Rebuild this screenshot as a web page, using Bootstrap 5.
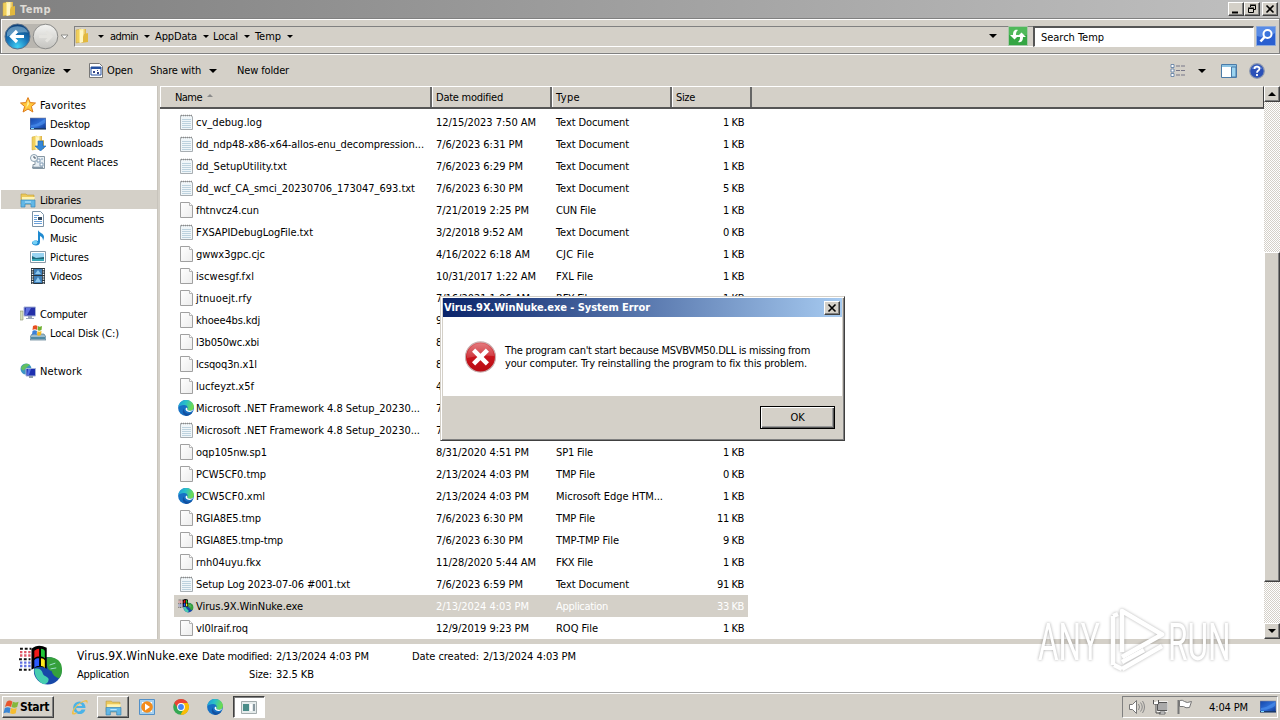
<!DOCTYPE html>
<html lang="en">
<head>
<meta charset="utf-8">
<title>Temp</title>
<link href="https://cdn.jsdelivr.net/npm/bootstrap@5.3.0/dist/css/bootstrap.min.css" rel="stylesheet">
<style>
:root{--face:#d4d0c8}
body{width:1280px;height:720px;overflow:hidden;background:var(--face);color:#000;font:11px/13px "DejaVu Sans Condensed","DejaVu Sans",sans-serif;font-stretch:condensed}
svg{display:block;flex:none}
[data-w]{display:inline-block;white-space:pre}
.frame{width:1280px;height:720px}
.titlebar{height:18px;background:linear-gradient(90deg,#808080,#c0c0c0);color:#dedbd5;font-weight:700;padding:0 2px 0 1px}
.raised{background:var(--face);border:1px solid;border-color:#fff #404040 #404040 #fff;box-shadow:inset -1px -1px #808080}
.wbtn{width:16px;height:14px}
.address{height:36px;border:1px solid;border-color:#808080 #808080 #808080 #777;box-shadow:inset 1px 1px #fff,inset 0 -1px #d8d5ce;padding-left:3px}
.crumbs{width:959px;height:21px;border-top:1px solid #808080;border-left:1px solid #808080;border-bottom:1px solid #fff;margin-left:4px}
.searchbox{width:221px;height:21px;background:#fff;border:1px solid #fff;border-top:2px solid #555;border-left:2px solid #555;padding:1px 0 0 6px;margin-left:5px}
.toolbar-row{height:32px;border-top:1px solid #fff;padding-left:12px}
.arr{width:0;height:0;border:4px solid transparent;border-top-color:#000;border-bottom:0;flex:none}
.arr.tiny{border-width:3px 3px 0}
.arr.up{border:4px solid transparent;border-bottom-color:#000;border-top:0}
.main{height:553px}
.tree{width:157px;background:#fff;padding-top:9px}
.tree>div{height:19px;padding-left:20px;gap:4px;border-left:1px solid #fff}
.tree span,.heads span{padding-top:1px}
.tree>.sub{padding-left:29px;gap:4px}
.tree>.root{padding-left:19px}
.tree>.sel{background:var(--face)}
.split{width:3px;background:var(--face);border-left:1px solid #c8c4bc}
.files{width:1104px;background:#fff}
.heads{height:23px;background:var(--face);border-top:1px solid #fff;border-bottom:2px solid #555;margin-bottom:2px;border-right:1px solid #404040}
.heads>div{border-left:1px solid #fff;border-right:2px solid #666;height:20px;padding-left:3px}
.file{height:22px;width:574px;margin-left:14px;padding-left:4px}
.file svg{margin-top:-1px}
.file.sel{background:var(--face)}
.file.sel .dim{color:#fff}
.c1{width:258px;gap:2px}.c2{width:120px}.c3{width:120px}.c4{width:68px;text-align:right}
.track{width:16px;background:repeating-conic-gradient(#fff 0 25%,#d4d0c8 0 50%) 0 0/2px 2px}
.details{height:49px;background:#fff;padding-left:18px;border-bottom:1px solid #aaa}
.band{height:5px;background:var(--face)}
.taskbar{height:27px;background:var(--face);border-top:1px solid #fff;padding-left:2px}
.start{width:52px;height:22px;font-weight:700;font-size:12px}
.task{width:32px;height:22px}
.task.on{background:#fff;border:1px solid;border-color:#404040 #fff #fff #404040;box-shadow:inset 1px 1px #808080}
.tray{width:156px;height:22px;border:1px solid;border-color:#808080 #fff #fff #808080;padding-left:5px}
.dlg{position:absolute;left:440px;top:296px;width:405px;height:145px;background:var(--face);border:1px solid;border-color:var(--face) #404040 #404040 var(--face);box-shadow:inset 1px 1px #fff,inset -1px -1px #808080;padding:1px 2px 2px 1px}
.dlg-title{height:19px;margin-left:1px;background:linear-gradient(90deg,#0a246a,#a6caf0);color:#fff;font-weight:700;padding-left:1px;padding-right:2px}
.dlg-body{height:79px;background:#fff;padding-left:21px;gap:8px;margin-left:1px}
.okb{width:75px;height:23px;border:1px solid #000;background:var(--face);box-shadow:inset 1px 1px #fff,inset -1px -1px #555,inset -2px -2px #999}
.wm{position:absolute;left:1030px;top:600px}
</style>
</head>
<body>
<svg width="0" height="0" class="position-absolute">
<defs>
<linearGradient id="gf" x1="0" x2="1"><stop offset="0" stop-color="#f9e27c"/><stop offset=".5" stop-color="#fff3b0"/><stop offset="1" stop-color="#dcae3a"/></linearGradient>
<linearGradient id="gs" x1="0" y1="0" x2="1" y2="1"><stop offset="0" stop-color="#1546a8"/><stop offset=".55" stop-color="#2f6fd8"/><stop offset="1" stop-color="#0c328c"/></linearGradient>
<radialGradient id="gb" cx=".5" cy=".9" r=".9"><stop offset="0" stop-color="#3fd0f4"/><stop offset=".5" stop-color="#1874b8"/><stop offset="1" stop-color="#0c3c74"/></radialGradient>
<linearGradient id="gg" x1="0" y1="0" x2="0" y2="1"><stop offset="0" stop-color="#f4f4f2"/><stop offset="1" stop-color="#c4c3bf"/></linearGradient>
<linearGradient id="gr" x1="0" y1="0" x2="0" y2="1"><stop offset="0" stop-color="#e0686c"/><stop offset=".5" stop-color="#c8141c"/><stop offset="1" stop-color="#b80c14"/></linearGradient>
<linearGradient id="ge" x1="0" y1="0" x2="1" y2=".3"><stop offset="0" stop-color="#1c98dc"/><stop offset=".5" stop-color="#2ac0c8"/><stop offset="1" stop-color="#6cdc50"/></linearGradient>
<linearGradient id="gp" x1="0" x2="1" y2="1"><stop offset="0" stop-color="#fff"/><stop offset="1" stop-color="#ececec"/></linearGradient>
<symbol id="folder" viewBox="0 0 16 16"><path d="M2 2l5-1v13l-5 1z" fill="#f0cf5c" stroke="#c9a33c" stroke-width=".5"/><path d="M5 1h7v9l-7 5z" fill="url(#gf)"/><path d="M10 6l4-1v9l-7 1z" fill="#e2b83e"/><path d="M6 2l3 1v11l-3 1z" fill="#fff6c4"/></symbol>
<symbol id="file" viewBox="0 0 16 16"><path d="M2.500.5h9l3 3v12h-12z" fill="url(#gp)" stroke="#a0a0a0"/><path d="M11.500.5v3h3" fill="#fff" stroke="#b5b5b5"/></symbol>
<symbol id="txt" viewBox="0 0 16 16"><path d="M2.500 1.500h11l1 1.500v12.500h-12z" fill="#f0f6f9" stroke="#a8aeb2"/><path d="M4 5.500h9M4 7.500h9M4 9.500h9M4 11.500h9M4 13.500h9" stroke="#bdd2de"/><path d="M3 1.500h11" stroke="#8a8a8a" stroke-dasharray="1 1" stroke-width="1.600"/></symbol>
<symbol id="edge" viewBox="0 0 16 16"><circle cx="8" cy="8" r="7.900" fill="#1670c4"/><path d="M.3 7C1 2.500 4.300.1 8 .1c4.500 0 7.900 3.200 7.900 6.700 0 2.500-1.800 4-4 4-1.900 0-2.900-.8-2.600-1.700.8-1 .5-4-3-4.100C3.600 4.900 1.200 6 .3 7z" fill="url(#ge)"/><path d="M5.600 8.500c0 3 2.500 5.500 5.800 5 1.500-.2 2.700-.9 3.300-1.700-1.200 2.500-3.500 4-6.200 4.100C5.500 15.200 3.600 12 5.600 8.500z" fill="#1250a0"/><path d="M9.300 9.100c-.3.900.7 1.700 2.600 1.700 1.300 0 2.400-.5 3.100-1.300-.2 1.300-1.500 2.400-3.500 2.400-3 0-5-2.500-3.300-4.200.9 0 1.300.6 1.100 1.400z" fill="#fff"/></symbol>
<symbol id="nuke" viewBox="0 0 48 44"><circle cx="31" cy="27" r="14.500" fill="#1748a8"/><path d="M30 13c7-1 13 2 15 7 2 6 1 12-2 15-4-1-7-4-8-8-3 0-6-4-5-14z" fill="#35a03c"/><path d="M17 25c5-1 8 1 9 5 1 3 6 3 6 6 0 3-2 5-5 5-6-2-10-8-10-16z" fill="#46cdb0"/><path d="M33 21l6-2M34 25l6-1" stroke="#9fe0d0"/><path d="M14 4c5-4 10-4 16-1v22c-5-3-10-3-16 1z" fill="#000"/><path d="M17 6c2-1 3-2 5-2v8c-2 0-3 0-5 2z" fill="#f01818"/><path d="M24 4c2 0 3 1 4 2v8c-1-1-2-2-4-2z" fill="#20c838"/><path d="M17 16c2-2 3-2 5-2v8c-2 0-3 0-5 2z" fill="#2c5cff"/><path d="M24 14c2 0 3 1 4 2v8c-1-1-2-2-4-2z" fill="#ffe81c"/><path d="M2 4h12M1 15h12M1 26h12" stroke="#111" stroke-width="2" stroke-dasharray="3 2"/><path d="M2 7.500h12M2 11h12" stroke="#e05868" stroke-width="2.400" stroke-dasharray="2.500 1.800"/><path d="M2 18.500h12M2 22h12" stroke="#6070e0" stroke-width="2.400" stroke-dasharray="2.500 1.800"/></symbol>
<symbol id="star" viewBox="0 0 16 16"><path d="M8 .6l2.200 5 5.300.4-4.100 3.500 1.500 5.500L8 12l-4.900 3 1.500-5.500L.5 6l5.300-.4z" fill="#ffc83c" stroke="#dd7a1a"/><path d="M8 3l1.200 4-3 4z" fill="#fff0a0"/></symbol>
<symbol id="desk" viewBox="0 0 16 16"><path d="M0 2h16v11H0z" fill="url(#gs)" stroke="#889" stroke-width=".6"/><path d="M1 9c5 0 9-3 14-6v4c-4 3-9 4-14 4z" fill="#4f93ee" opacity=".6"/><path d="M0 12h16v1.500H0z" fill="#183a6c"/><path d="M1 12h3v1H1z" fill="#7edaff"/></symbol>
<symbol id="down" viewBox="0 0 16 16"><use href="#folder"/><path d="M8 6h5v5h3l-5.500 5L5 11h3z" fill="#3487d8" stroke="#1c62ac" stroke-width=".6"/></symbol>
<symbol id="recent" viewBox="0 0 16 16"><path d="M5 2.500h9.500v12H3v-4h2z" fill="#e7eef3" stroke="#8797a3"/><path d="M7 5h3v3H7zM10 9h3v3h-3zM11 5h2" fill="#fff" stroke="#7f9ab4"/><path d="M2 13.500h11" stroke="#8496a6" stroke-width="1.600"/><circle cx="4" cy="4" r="3.500" fill="#f4f8fa" stroke="#8aa0b0"/><path d="M4 2v2h2" fill="none" stroke="#456"/></symbol>
<symbol id="lib" viewBox="0 0 16 16"><path d="M1 2h5l1 1h7v9H1z" fill="#ecc95a" stroke="#bd9a3a" stroke-width=".6"/><path d="M2 5h13l-1 4H2z" fill="#fff3b2"/><path d="M1 8h14v7h-4v-3H5v3H1z" fill="#62b7e6" stroke="#3b87b8" stroke-width=".7"/><path d="M5 10h6" stroke="#c6ecff"/></symbol>
<symbol id="doc" viewBox="0 0 16 16"><path d="M2.500.5h8l3 3v12h-11z" fill="#fff" stroke="#7a92a6"/><path d="M4 4.500h5M4 6.500h3M4 8.500h3M4 10.500h8M4 12.500h8" stroke="#6aa0d8"/><path d="M8 6h4v3H8z" fill="#34495e"/></symbol>
<symbol id="music" viewBox="0 0 16 16"><path d="M8 0c1 3 6 3 6 7 0 2-1 3-1 4 0-3-1-4-3-5v6c0 5-8 4-8 1 0-2 3-3 6-2V0z" fill="#1f8ad0"/><ellipse cx="5" cy="12.500" rx="2.500" ry="2" fill="#74d0f5"/></symbol>
<symbol id="pic" viewBox="0 0 16 16"><path d="M.5 2.500h15v11H.5z" fill="#fff" stroke="#8a9aa8"/><path d="M2 4h12v8H2z" fill="#9ad4f2"/><path d="M2 7l4 2 8-1v4H2z" fill="#1e6a7c"/><path d="M2 10h12v2H2z" fill="#38a8b8"/></symbol>
<symbol id="vid" viewBox="0 0 16 16"><path d="M1 0h14v16H1z" fill="#28353e"/><path d="M4 1h8v6H4zM4 8h8v7H4z" fill="#3f7fb8"/><path d="M5 6l3-4 3 4zM5 14l3-5 3 5z" fill="#8fc9ef"/><path d="M2.500 1v15M13.500 1v15" stroke="#fff" stroke-width="1.500" stroke-dasharray="1.200 1.200"/></symbol>
<symbol id="comp" viewBox="0 0 16 16"><path d="M0 5h3v9H0z" fill="#d6dfbd" stroke="#8a946c" stroke-width=".6"/><path d="M4 1h11.500v9H4z" fill="#2430a8" stroke="#a8b4d8"/><path d="M6 2h5l-4 7H5z" fill="#5f70e0"/><path d="M8 10h4v2h2v1H6v-1h2z" fill="#9aa6ba"/></symbol>
<symbol id="disk" viewBox="0 0 16 16"><path d="M2 9h12l2 3v3H0v-3z" fill="#9dbccc" stroke="#567a8c" stroke-width=".7"/><path d="M1 12h14v2H1z" fill="#4f8aa4"/><path d="M3 1c2-1 3-1 4.500 0L7 5C6 4 4 4 2.500 5z" fill="#e85020"/><path d="M8 1c1 1 2 1 4 0l-.5 4c-2 1-3 1-4 0z" fill="#70b030"/><path d="M2.500 6c1-1 3-1 4.500 0l-.5 4c-1-1-3-1-4.500 0z" fill="#3a80d8"/><path d="M7.500 6c1 1 2 1 4 0l-.5 4c-2 1-3 1-4 0z" fill="#f4b820"/></symbol>
<symbol id="net" viewBox="0 0 16 16"><circle cx="6" cy="6" r="5.500" fill="#3c94c4"/><path d="M1 5c2-5 7-5 9-3-3 1-3 3-5 4-1 2-3 2-4-1z" fill="#62c060"/><path d="M6 5.500h9.500V13H6z" fill="#1c2fb0" stroke="#a6b4d6"/><path d="M8 6h3l-2 6H7z" fill="#5470e4"/><path d="M9 13h4v2H9z" fill="#8e9cac"/></symbol>
<symbol id="flag" viewBox="0 0 18 18"><path d="M4 3c2-2 4-2 6 0L8.500 8.500C6 7 4 7 2 8.500z" fill="#e8562c"/><path d="M10.500 3c2 1 4 1 6 0L15 8.500c-2 1-4 1-6 0z" fill="#84b83c"/><path d="M2 9.500c2-1 4-1 6 0L7 15c-2-1-4-1-6.500 0z" fill="#3a86d4"/><path d="M8.500 9.500c2 1 4 1 6 0L13.500 15c-2 1-4 1-6 0z" fill="#f6bd30"/></symbol>
</defs></svg>

<div class="frame d-flex flex-column">
 <div class="titlebar d-flex align-items-center">
  <svg width="16" height="16"><use href="#folder"/></svg><span data-w="31" style="margin-left:3px">Temp</span>
  <div class="ms-auto d-flex">
   <div class="raised wbtn"><svg width="14" height="12"><path d="M3 9.500h6" stroke="#000" stroke-width="2"/></svg></div>
   <div class="raised wbtn"><svg width="14" height="12"><path d="M5.500 4V2.500h5v4H9M5 2h6" fill="none" stroke="#000"/><path d="M3.500 5.500h5v4h-5zM3 5h6" fill="none" stroke="#000"/></svg></div>
   <div class="raised wbtn" style="margin-left:2px"><svg width="14" height="12"><path d="M3.500 2.500l7 7m0-7l-7 7" stroke="#000" stroke-width="1.600"/></svg></div>
  </div>
 </div>
 <div class="address d-flex align-items-center">
  <svg width="66" height="30" viewBox="0 0 66 30"><path d="M14 3h28a12 12 0 010 24H14z" fill="#b9b6b0"/><circle cx="13.500" cy="15.500" r="12.500" fill="url(#gb)" stroke="#59708a"/><path d="M3 11.500a11 9 0 0121 0q-10-1-21 4z" fill="#9bc4de" opacity=".55"/><path d="M20 15.500H8m5-5.500L7.500 15.500 13 21" stroke="#fff" stroke-width="3.200" fill="none"/><circle cx="41.500" cy="15.500" r="12.300" fill="url(#gg)" stroke="#8c8c8a"/><path d="M35 15.500h12m-5-5l5 5-5 5" stroke="#e4e3df" stroke-width="3" fill="none"/><path d="M57 14h7l-3.500 4z" fill="#fff" stroke="#8c8c88"/></svg>
  <div class="crumbs d-flex align-items-center">
   <svg width="16" height="16" style="margin-left:-1px"><use href="#folder"/></svg>
   <i class="arr tiny" style="margin-left:8px"></i><span data-w="28" style="margin-left:6px">admin</span>
   <i class="arr tiny" style="margin-left:6px"></i><span data-w="42" style="margin-left:5px">AppData</span>
   <i class="arr tiny" style="margin-left:6px"></i><span data-w="25" style="margin-left:4px">Local</span>
   <i class="arr tiny" style="margin-left:6px"></i><span data-w="26" style="margin-left:5px">Temp</span>
   <i class="arr tiny" style="margin-left:6px"></i>
   <i class="arr ms-auto" style="margin-right:36px"></i>
  </div>
  <svg width="20" height="20" viewBox="0 0 20 20" style="margin-left:-25px"><path d="M.5.500h19v19H.5z" fill="#35a643" stroke="#a9c8a9"/><path d="M1 1h18v8H1z" fill="#5cc264" opacity=".7"/><path d="M10 4c-4-1-5 2-5 5H2l4.500 4.500L11 9H8c0-2 0-3 2-5zM10 16c4 1 5-2 5-5h3l-4.500-4.500L9 11h3c0 2 0 3-2 5z" fill="#fff"/></svg>
  <div class="searchbox d-flex align-items-center"><span data-w="63">Search Temp</span></div>
  <svg width="20" height="20" viewBox="0 0 20 20" style="margin-left:2px"><path d="M.5.500h19v19H.5z" fill="#2a5fd0" stroke="#8aa8dc"/><path d="M1 10q9 3 18-3V1H1z" fill="#6c9ef0" opacity=".7"/><circle cx="11.500" cy="8" r="4" fill="#3b74dc" stroke="#fff" stroke-width="2"/><path d="M8.500 11l-4 4.500" stroke="#fff" stroke-width="2.600"/></svg>
 </div>
 <div class="toolbar-row d-flex align-items-center">
  <span data-w="43">Organize</span><i class="arr" style="margin-left:8px"></i>
  <svg width="14" height="15" viewBox="0 0 14 15" style="margin-left:18px"><path d="M.5.500h10l3 3v11H.5z" fill="#fff" stroke="#777"/><path d="M2 4h10v8H2z" fill="#fff" stroke="#2450a0"/><path d="M2 5h10" stroke="#2450a0" stroke-width="2"/><path d="M4 8h2v2H4zM8 7h1v1H8zM8 9h2v2H8z" fill="#334488"/></svg>
  <span data-w="26" style="margin-left:4px">Open</span><span data-w="51" style="margin-left:17px">Share with</span><i class="arr" style="margin-left:8px"></i>
  <span data-w="52" style="margin-left:20px">New folder</span>
  <div class="ms-auto d-flex align-items-center" style="margin-right:15px">
   <svg width="16" height="13"><path d="M1 .5h3v3H1zM1 5h3v3H1zM1 9.500h3v3H1z" fill="#fff" stroke="#5577a0" stroke-width=".8"/><path d="M6 2h10M6 6.500h10M6 11h10" stroke="#778" stroke-dasharray="4 1"/></svg>
   <i class="arr" style="margin:0 15px 0 12px"></i>
   <svg width="16" height="14"><path d="M.5.500h15v13H.5z" fill="#fff" stroke="#4a7ba8"/><path d="M1 1h14v2H1z" fill="#8cc4e4"/><path d="M10.500 3h4.500v10h-4.500z" fill="#9cd4f0" stroke="#4a7ba8"/></svg>
   <svg width="16" height="16" viewBox="0 0 16 16" style="margin-left:12px"><circle cx="8" cy="8" r="7.300" fill="#2a50b8" stroke="#8c98b0" stroke-width="1.200"/><path d="M2.500 6a6 6 0 0111 0q-5-1-11 0z" fill="#7f9ce0" opacity=".6"/><path d="M5.500 6c0-3 5-3 5-.3 0 2-2.500 1.800-2.500 4M8 11v2" stroke="#fff" stroke-width="1.800" fill="none"/></svg>
  </div>
 </div>
 <div class="main d-flex">
  <div class="tree" id="tree"></div>
  <div class="split"></div>
  <div class="files" id="files">
   <div class="heads d-flex">
    <div class="d-flex align-items-center" style="width:272px;padding-left:14px"><span data-w="27">Name</span><i class="arr up" style="margin-left:5px;margin-bottom:3px;border-bottom-color:#8a8a8a;border-width:0 3px 3px"></i></div>
    <div class="d-flex align-items-center" style="width:120px"><span data-w="67">Date modified</span></div>
    <div class="d-flex align-items-center" style="width:120px"><span data-w="24">Type</span></div>
    <div class="d-flex align-items-center" style="width:80px"><span data-w="19">Size</span></div>
   </div>
  </div>
  <div class="track d-flex flex-column">
   <div class="raised d-flex align-items-center justify-content-center" style="height:16px"><i class="arr up"></i></div>
   <div class="raised" style="height:330px;margin-top:150px"></div>
   <div class="raised d-flex align-items-center justify-content-center mt-auto" style="height:16px"><i class="arr"></i></div>
  </div>
 </div>
 <div class="band"></div>
 <div class="details d-flex">
  <svg width="46" height="42" style="margin-top:1px"><use href="#nuke"/></svg>
  <div style="margin:6px 0 0 13px;width:125px"><div style="height:18px;font-size:12px"><span data-w="121">Virus.9X.WinNuke.exe</span></div><div><span data-w="52">Application</span></div></div>
  <div class="text-end" style="margin-top:6px;width:70px"><div style="height:18px"><span data-w="70">Date modified:</span></div><div><span data-w="23">Size:</span></div></div>
  <div style="margin:6px 0 0 4px;width:136px"><div style="height:18px"><span data-w="93">2/13/2024 4:03 PM</span></div><div><span data-w="38">32.5 KB</span></div></div>
  <div style="margin-top:6px"><span data-w="67">Date created:</span><span data-w="93" style="margin-left:4px">2/13/2024 4:03 PM</span></div>
 </div>
 <div class="taskbar d-flex align-items-center">
  <div class="raised start d-flex align-items-center"><svg width="17" height="17"><use href="#flag"/></svg><span data-w="29">Start</span></div>
  <svg width="17" height="17" viewBox="0 0 17 17" style="margin-left:17px"><path d="M14.500 10.500A6.300 6.300 0 118.500 2.500c4 0 6 3 6 6.500H5.200c0 4 4 4.500 5.300 1.500z" fill="#4ab3e8"/><path d="M5.300 7h5.800c-.2-3-5.400-3-5.800 0z" fill="#d4d0c8"/><path d="M1 15C0 11 7 3 15 1c2 0 2 2 1 4 0-3-2-3-4-2C7 5 3 10 2.500 13.500c1 1 3 0 4 0C4 16 2 16 1 15z" fill="#efc04a"/></svg>
  <div class="raised task d-flex align-items-center justify-content-center" style="margin-left:9px"><svg width="17" height="17"><use href="#lib"/></svg></div>
  <svg width="16" height="16" viewBox="0 0 16 16" style="margin-left:10px"><path d="M.5.500h15v15H.5z" fill="#a6d0ee" stroke="#5290c8"/><path d="M3 3h10v10H3z" fill="#fff"/><circle cx="8" cy="8" r="5.800" fill="#f28c1c"/><path d="M6 4.500l5 3.500-5 3.500z" fill="#fff"/></svg>
  <svg width="16" height="16" viewBox="0 0 16 16" style="margin-left:18px"><circle cx="8" cy="8" r="7.800" fill="#34a853"/><path d="M1.200 4.100A7.800 7.800 0 0114.800 4H8L5 9.600z" fill="#ea4335"/><path d="M14.800 4A7.800 7.800 0 017.500 15.800L11.300 9 8 4z" fill="#fbbc05"/><circle cx="8" cy="8" r="3.900" fill="#fff"/><circle cx="8" cy="8" r="2.900" fill="#4285f4"/></svg>
  <svg width="16" height="16" style="margin-left:18px"><use href="#edge"/></svg>
  <div class="task on d-flex align-items-center justify-content-center" style="margin-left:10px"><svg width="16" height="13"><path d="M.5.500h15v12H.5z" fill="#e6ecec" stroke="#a3acad"/><path d="M2 3h6v7H2z" fill="#4a8c88"/><path d="M9 3h2v7H9z" fill="#fff"/><path d="M12 3h2v7h-2z" fill="#8898a0"/></svg></div>
  <div class="tray ms-auto d-flex align-items-center" style="margin-right:2px">
   <svg width="18" height="16"><path d="M1.500 5.500h3l4-4v13l-4-4h-3z" fill="#fff" stroke="#777"/><path d="M10.500 5q2 3 0 6M12.500 3.500q3.500 4.500 0 9M14.500 2q4 6 0 12" fill="none" stroke="#888"/></svg>
   <svg width="17" height="16" style="margin-left:6px"><path d="M5.500 3.500h10v8h-10z" fill="#aaa" stroke="#555"/><path d="M4.500 2.500h11v10h-11z" fill="none" stroke="#fff" opacity=".7"/><path d="M8 13h5v2H7z" fill="#fff" stroke="#666"/><path d="M1.500 1v4h5V1M4 5v9h5" fill="none" stroke="#555"/><path d="M2 3h4v2H2z" fill="#fff"/></svg>
   <svg width="17" height="16" style="margin-left:7px"><path d="M2.500 1v14" stroke="#777" stroke-width="2"/><path d="M3.500 1.500q3-1 5 1t7 0l-2 6q-4 1-6-1l-4 0z" fill="#fff" stroke="#777"/></svg>
   <span data-w="39" style="margin-left:16px">4:04 PM</span>
   <svg width="16" height="16" style="margin-left:12px"><use href="#desk"/></svg>
  </div>
 </div>
</div>

<svg class="wm" width="240" height="76" viewBox="0 0 240 76">
 <g fill="none" stroke="#fff" stroke-width="4.500" stroke-linejoin="round" style="filter:drop-shadow(0 0 1.500px rgba(0,0,0,.3))">
  <path d="M92 52V11L132 34.500 92 57" />
  <path d="M83 16V65M83 16l5-2"/>
  <path d="M92 69L132 46M92 62l22-12M84 65l8 4"/>
 </g>
 <g fill="#fff" style="filter:drop-shadow(0 0 1.500px rgba(0,0,0,.35));font:400 51px Roboto,sans-serif"><text transform="translate(8 60) scale(.62 1)">ANY</text><text transform="translate(138 60) scale(.62 1)">RUN</text></g>
</svg>

<div class="dlg">
 <div class="dlg-title d-flex align-items-center"><span data-w="206">Virus.9X.WinNuke.exe - System Error</span>
  <div class="raised wbtn ms-auto"><svg width="14" height="12"><path d="M3.500 2.500l7 7m0-7l-7 7" stroke="#000" stroke-width="1.600"/></svg></div></div>
 <div class="dlg-body d-flex align-items-center">
  <svg width="33" height="34" viewBox="0 0 34 34"><circle cx="17" cy="17" r="15.500" fill="url(#gr)" stroke="#c8b0b0" stroke-width="1.200"/><path d="M3 18a14 14 0 0128-2q-13-2-28 2z" fill="#fff" opacity=".16"/><path d="M11.500 11.500l11 11m0-11l-11 11" stroke="#fff" stroke-width="4.600" stroke-linecap="square"/></svg>
  <div><div><span data-w="305">The program can't start because MSVBVM50.DLL is missing from</span></div><div><span data-w="302">your computer. Try reinstalling the program to fix this problem.</span></div></div>
 </div>
 <div class="d-flex justify-content-end" style="padding:10px 7px 0 0"><div class="okb d-flex align-items-center justify-content-center"><span data-w="14">OK</span></div></div>
</div>

<script src="https://cdn.jsdelivr.net/npm/bootstrap@5.3.0/dist/js/bootstrap.bundle.min.js"></script>
<script>
const tree=[['root','star','Favorites',46],['sub','desk','Desktop',40],['sub','down','Downloads',53],['sub','recent','Recent Places',68],0,
['root sel','lib','Libraries',41],['sub','doc','Documents',54],['sub','music','Music',27],['sub','pic','Pictures',39],['sub','vid','Videos',32],0,
['root','comp','Computer',47],['sub','disk','Local Disk (C:)',69],0,['root','net','Network',42]];
document.getElementById('tree').innerHTML=tree.map(t=>t?`<div class="${t[0]} d-flex align-items-center"><svg width="16" height="16"><use href="#${t[1]}"/></svg><span data-w="${t[3]}">${t[2]}</span></div>`:'<div></div>').join('');
const T='Text Document';
const rows=[['txt','cv_debug.log',66,'12/15/2023 7:50 AM',100,T,73,'1'],
['txt','dd_ndp48-x86-x64-allos-enu_decompression...',228,'7/6/2023 6:31 PM',87,T,73,'1'],
['txt','dd_SetupUtility.txt',91,'7/6/2023 6:29 PM',87,T,73,'1'],
['txt','dd_wcf_CA_smci_20230706_173047_693.txt',219,'7/6/2023 6:30 PM',87,T,73,'5'],
['file','fhtnvcz4.cun',63,'7/21/2019 2:25 PM',93,'CUN File',40,'1'],
['txt','FXSAPIDebugLogFile.txt',117,'3/2/2018 9:52 AM',87,T,73,'0'],
['file','gwwx3gpc.cjc',69,'4/16/2022 6:18 AM',94,'CJC File',38,'1'],
['file','iscwesgf.fxl',58,'10/31/2017 1:22 AM',100,'FXL File',37,'1'],
['file','jtnuoejt.rfy',56,'7/16/2021 1:06 AM',94,'RFY File',37,'1'],
['file','khoee4bs.kdj',64,'9',6,'',0,''],
['file','l3b050wc.xbi',63,'8',6,'',0,''],
['file','lcsqoq3n.x1l',61,'8',6,'',0,''],
['file','lucfeyzt.x5f',58,'4',6,'',0,''],
['edge','Microsoft .NET Framework 4.8 Setup_20230...',224,'7',6,'',0,''],
['txt','Microsoft .NET Framework 4.8 Setup_20230...',224,'7',6,'',0,''],
['file','oqp105nw.sp1',71,'8/31/2020 4:51 PM',93,'SP1 File',37,'1'],
['file','PCW5CF0.tmp',70,'2/13/2024 4:03 PM',93,'TMP File',39,'0'],
['edge','PCW5CF0.xml',69,'2/13/2024 4:03 PM',93,'Microsoft Edge HTM...',107,'1'],
['file','RGIA8E5.tmp',65,'7/6/2023 6:30 PM',87,'TMP File',39,'11'],
['file','RGIA8E5.tmp-tmp',87,'7/6/2023 6:30 PM',87,'TMP-TMP File',63,'9'],
['file','rnh04uyu.fkx',65,'11/28/2020 5:44 AM',100,'FKX File',37,'1'],
['txt','Setup Log 2023-07-06 #001.txt',154,'7/6/2023 6:59 PM',87,T,73,'91'],
['nuke','Virus.9X.WinNuke.exe',107,'2/13/2024 4:03 PM',93,'Application',52,'33'],
['file','vl0lraif.roq',52,'12/9/2019 9:23 PM',93,'ROQ File',42,'1']];
document.getElementById('files').insertAdjacentHTML('beforeend',rows.map(r=>{
 const s=(w,t)=>t?`<span data-w="${w}">${t}</span>`:'';
 return `<div class="file d-flex align-items-center ${r[0]=='nuke'?'sel':''}"><div class="c1 d-flex align-items-center"><svg width="16" height="16"><use href="#${r[0]}"/></svg>${s(r[2],r[1])}</div><div class="c2 dim">${s(r[4],r[3])}</div><div class="c3 dim">${s(r[6],r[5])}</div><div class="c4 dim">${r[7]?s(r[7].length>1?27:21,r[7]+' KB'):''}</div></div>`}).join(''));
document.querySelectorAll('[data-w]').forEach(e=>{
 const n=e.textContent.length,w=+e.dataset.w;
 e.style.letterSpacing=((w-e.getBoundingClientRect().width)/n).toFixed(3)+'px';
});
</script>
</body>
</html>
